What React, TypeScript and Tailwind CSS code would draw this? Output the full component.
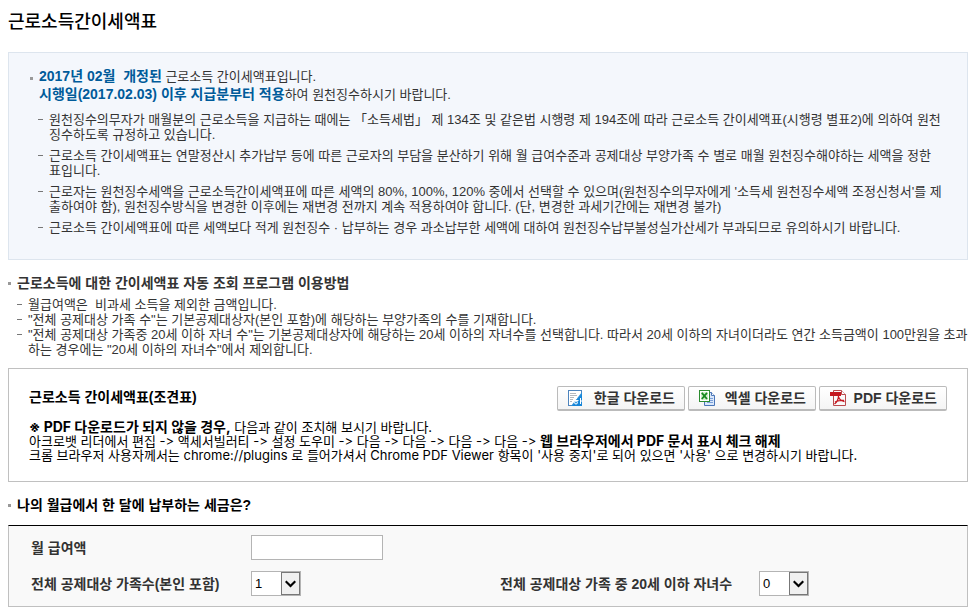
import type { ReactNode } from "react";

function Dash({ children }: { children: ReactNode }) {
  return (
    <li className="flex">
      <span aria-hidden="true" className="mt-[7px] mr-[6px] h-px w-[5px] shrink-0 bg-[#777777]" />
      <span className="min-w-0 break-all">{children}</span>
    </li>
  );
}

function SquareHeading({ children, className }: { children: ReactNode; className: string }) {
  return (
    <h2 className={`flex items-center gap-[6px] text-[14px] leading-[18px] font-bold ${className}`}>
      <span aria-hidden="true" className="size-[3px] bg-[#999999]" />
      {children}
    </h2>
  );
}

function DownloadButton({ icon, children }: { icon: ReactNode; children: ReactNode }) {
  return (
    <button
      type="button"
      className="flex h-[25px] w-32 items-center justify-between rounded-[2px] border border-b-2 border-[#bbbbbb] bg-linear-to-b from-white to-[#f4f4f4] pr-[9px] pl-[10px] text-[14px] leading-[18px] font-bold text-[#333333]"
    >
      {icon}
      <span className="whitespace-nowrap">{children}</span>
    </button>
  );
}

function HangulIcon() {
  return (
    <svg width="15" height="16" viewBox="0 0 15 16" aria-hidden="true">
      <defs>
        <linearGradient id="hwp" x1="0" y1="0" x2="1" y2="1">
          <stop offset="0" stopColor="#b5e0fa" />
          <stop offset="0.6" stopColor="#1685d8" />
        </linearGradient>
      </defs>
      <rect x="0.5" y="0.5" width="13" height="15" fill="#fff" stroke="#4e84bd" />
      <path d="M2 3.5h6M2 5.5h7M2 7.5h4M2 9.5h3M2 11.5h2" stroke="#b4b8bd" />
      <path d="M14 2v14H3z" fill="url(#hwp)" />
      <path d="M7 8.5h2M5.5 10.5h5M12.500 8v6M12.500 11h2" stroke="#fff" fill="none" />
      <circle cx="8" cy="12.500" r="1.500" stroke="#fff" fill="#3b9ee3" />
    </svg>
  );
}

function ExcelIcon() {
  return (
    <svg width="16" height="16" viewBox="0 0 16 16" aria-hidden="true">
      <path d="M5.500 2.500h7l3 3v10h-10z" fill="#d9e7fb" stroke="#4b76b8" />
      <path d="M12.500 2.500v3h3" fill="#fff" stroke="#4b76b8" />
      <path d="M8 8.500h6M8 10.500h6M8 12.500h6" stroke="#7ba0d8" />
      <rect x="0.500" y="0.500" width="10" height="11" fill="#fff" stroke="#2c8c2f" />
      <rect x="2" y="2" width="7" height="8" fill="#d5efcf" />
      <path d="M2.800 2.800l5.200 6.200M8 2.800l-5.200 6.200" stroke="#178a20" strokeWidth="1.800" />
    </svg>
  );
}

function PdfIcon() {
  return (
    <svg width="16" height="16" viewBox="0 0 16 16" aria-hidden="true">
      <path d="M3.500 0.500h8l4 4v11h-12z" fill="#fafafa" stroke="#ba4b4e" />
      <path d="M11.500 0.500v4h4" fill="#fff" stroke="#ba4b4e" />
      <rect y="2" width="11" height="4" fill="#c51820" />
      <path
        d="M8.500 6c0 3-1.500 6-4 8M8.500 6c.3 2.500 2.500 5 6 5.500M5 12c2.500-1.500 5.500-2 9-1.500"
        fill="none"
        stroke="#c51820"
        strokeWidth="1.300"
      />
    </svg>
  );
}

function NumberSelect({ id, value }: { id: string; value: number }) {
  return (
    <div className="relative h-[25px] w-[50px]">
      <select
        id={id}
        defaultValue={value}
        className="size-full appearance-none border border-[#b4b4b4] bg-white pl-[3px] text-[13px] font-normal text-black"
      >
        {[0, 1, 2, 3, 4, 5, 6, 7, 8, 9, 10, 11].map((n) => (
          <option key={n}>{n}</option>
        ))}
      </select>
      <span
        aria-hidden="true"
        className="pointer-events-none absolute top-px right-px flex h-[23px] w-[19px] items-center justify-center border border-[#777777] bg-[#f0f0f0]"
      >
        <svg width="11" height="8" viewBox="0 0 11 8">
          <path d="M0.700 1.200l4.800 4.800 4.800-4.800" fill="none" stroke="#000" strokeWidth="2.200" />
        </svg>
      </span>
    </div>
  );
}

export default function App() {
  return (
    <main className="px-2 pt-[11px] pb-[6px] font-['Liberation_Sans','Noto_Sans_CJK_KR',sans-serif] text-[13px] leading-[15px] text-[#333333]">
      <h1 className="text-[18px] leading-[22px] font-medium text-black">근로소득간이세액표</h1>

      <section className="mt-[19px] border border-[#dde5ee] bg-[#f4f7fc] pt-[15px] pr-[23px] pb-6 pl-[21px]">
        <div className="flex gap-[6px] leading-[18px]">
          <span aria-hidden="true" className="mt-[9px] size-[3px] shrink-0 bg-[#999999]" />
          <p>
            <strong className="text-[14px] leading-[12px] text-[#005b9a]">2017년 02월&nbsp; 개정된</strong> 근로소득
            간이세액표입니다.
            <br />
            <strong className="text-[14px] leading-[12px] text-[#005b9a]">
              시행일(2017.02.03) 이후 지급분부터 적용
            </strong>
            하여 원천징수하시기 바랍니다.
          </p>
        </div>
        <ul className="mt-2 flex flex-col gap-[6px] pl-2">
          <Dash>
            원천징수의무자가 매월분의 근로소득을 지급하는 때에는 「소득세법」 제 134조 및 같은법 시행령 제 194조에 따라
            근로소득 간이세액표(시행령 별표2)에 의하여 원천
            <br />
            징수하도록 규정하고 있습니다.
          </Dash>
          <Dash>
            근로소득 간이세액표는 연말정산시 추가납부 등에 따른 근로자의 부담을 분산하기 위해 월 급여수준과 공제대상
            부양가족 수 별로 매월 원천징수해야하는 세액을 정한
            <br />
            표입니다.
          </Dash>
          <Dash>
            근로자는 원천징수세액을 근로소득간이세액표에 따른 세액의 80%, 100%, 120% 중에서 선택할 수
            있으며(원천징수의무자에게 '소득세 원천징수세액 조정신청서'를 제
            <br />
            출하여야 함), 원천징수방식을 변경한 이후에는 재변경 전까지 계속 적용하여야 합니다. (단, 변경한 과세기간에는
            재변경 불가)
          </Dash>
          <Dash>
            근로소득 간이세액표에 따른 세액보다 적게 원천징수 · 납부하는 경우 과소납부한 세액에 대하여
            원천징수납부불성실가산세가 부과되므로 유의하시기 바랍니다.
          </Dash>
        </ul>
      </section>

      <section>
        <SquareHeading className="mt-[14px]">근로소득에 대한 간이세액표 자동 조회 프로그램 이용방법</SquareHeading>
        <ul className="mt-[5px] pl-[9px]">
          <Dash>월급여액은&nbsp; 비과세 소득을 제외한 금액입니다.</Dash>
          <Dash>"전체 공제대상 가족 수"는 기본공제대상자(본인 포함)에 해당하는 부양가족의 수를 기재합니다.</Dash>
          <Dash>
            "전체 공제대상 가족중 20세 이하 자녀 수"는 기본공제대상자에 해당하는 20세 이하의 자녀수를 선택합니다. 따라서
            20세 이하의 자녀이더라도 연간 소득금액이 100만원을 초과
            <br />
            하는 경우에는 "20세 이하의 자녀수"에서 제외합니다.
          </Dash>
        </ul>
      </section>

      <section className="mt-[11px] border border-[#c0c0c0] pt-[17px] pr-5 pb-[19px] pl-5 text-black">
        <div className="flex items-start justify-between">
          <h2 className="text-[14px] leading-[22px] font-bold">근로소득 간이세액표(조견표)</h2>
          <div className="flex gap-[3px]">
            <DownloadButton icon={<HangulIcon />}>한글 다운로드</DownloadButton>
            <DownloadButton icon={<ExcelIcon />}>엑셀 다운로드</DownloadButton>
            <DownloadButton icon={<PdfIcon />}>PDF 다운로드</DownloadButton>
          </div>
        </div>
        <p className="mt-[9px] font-['Inter','Noto_Sans_CJK_KR',sans-serif] leading-[14px] [font-feature-settings:'calt'_0]">
          <strong className="text-[14px] leading-[12px]">※ PDF 다운로드가 되지 않을 경우,</strong> 다음과 같이 조치해
          보시기 바랍니다.
          <br />
          아크로뱃 리더에서 편집 -&gt; 액세서빌러티 -&gt; 설정 도우미 -&gt; 다음 -&gt; 다음 -&gt; 다음 -&gt; 다음 -&gt;{" "}
          <strong className="text-[14px] leading-[12px]">웹 브라우저에서 PDF 문서 표시 체크 해제</strong>
          <br />
          크롬 브라우저 사용자께서는 chrome://plugins 로 들어가셔서 Chrome PDF Viewer 항목이 '사용 중지'로 되어 있으면
          '사용' 으로 변경하시기 바랍니다.
        </p>
      </section>

      <SquareHeading className="mt-[14px] text-black">나의 월급에서 한 달에 납부하는 세금은?</SquareHeading>
      <form className="mt-[11px] grid grid-cols-[220px_249px_259px_1fr] items-center gap-y-[11px] border border-[#c0c0c0] border-t-black bg-[#f9f9f9] pt-[9px] pb-[10px] pl-[22px] text-[14px] leading-[18px] font-bold">
        <label htmlFor="salary">월 급여액</label>
        <input
          id="salary"
          type="text"
          className="col-span-3 h-[25px] w-[132px] border border-[#b4b4b4] bg-white px-1 text-[13px] font-normal"
        />
        <label htmlFor="family">전체 공제대상 가족수(본인 포함)</label>
        <NumberSelect id="family" value={1} />
        <label htmlFor="children">전체 공제대상 가족 중 20세 이하 자녀수</label>
        <NumberSelect id="children" value={0} />
      </form>
    </main>
  );
}
